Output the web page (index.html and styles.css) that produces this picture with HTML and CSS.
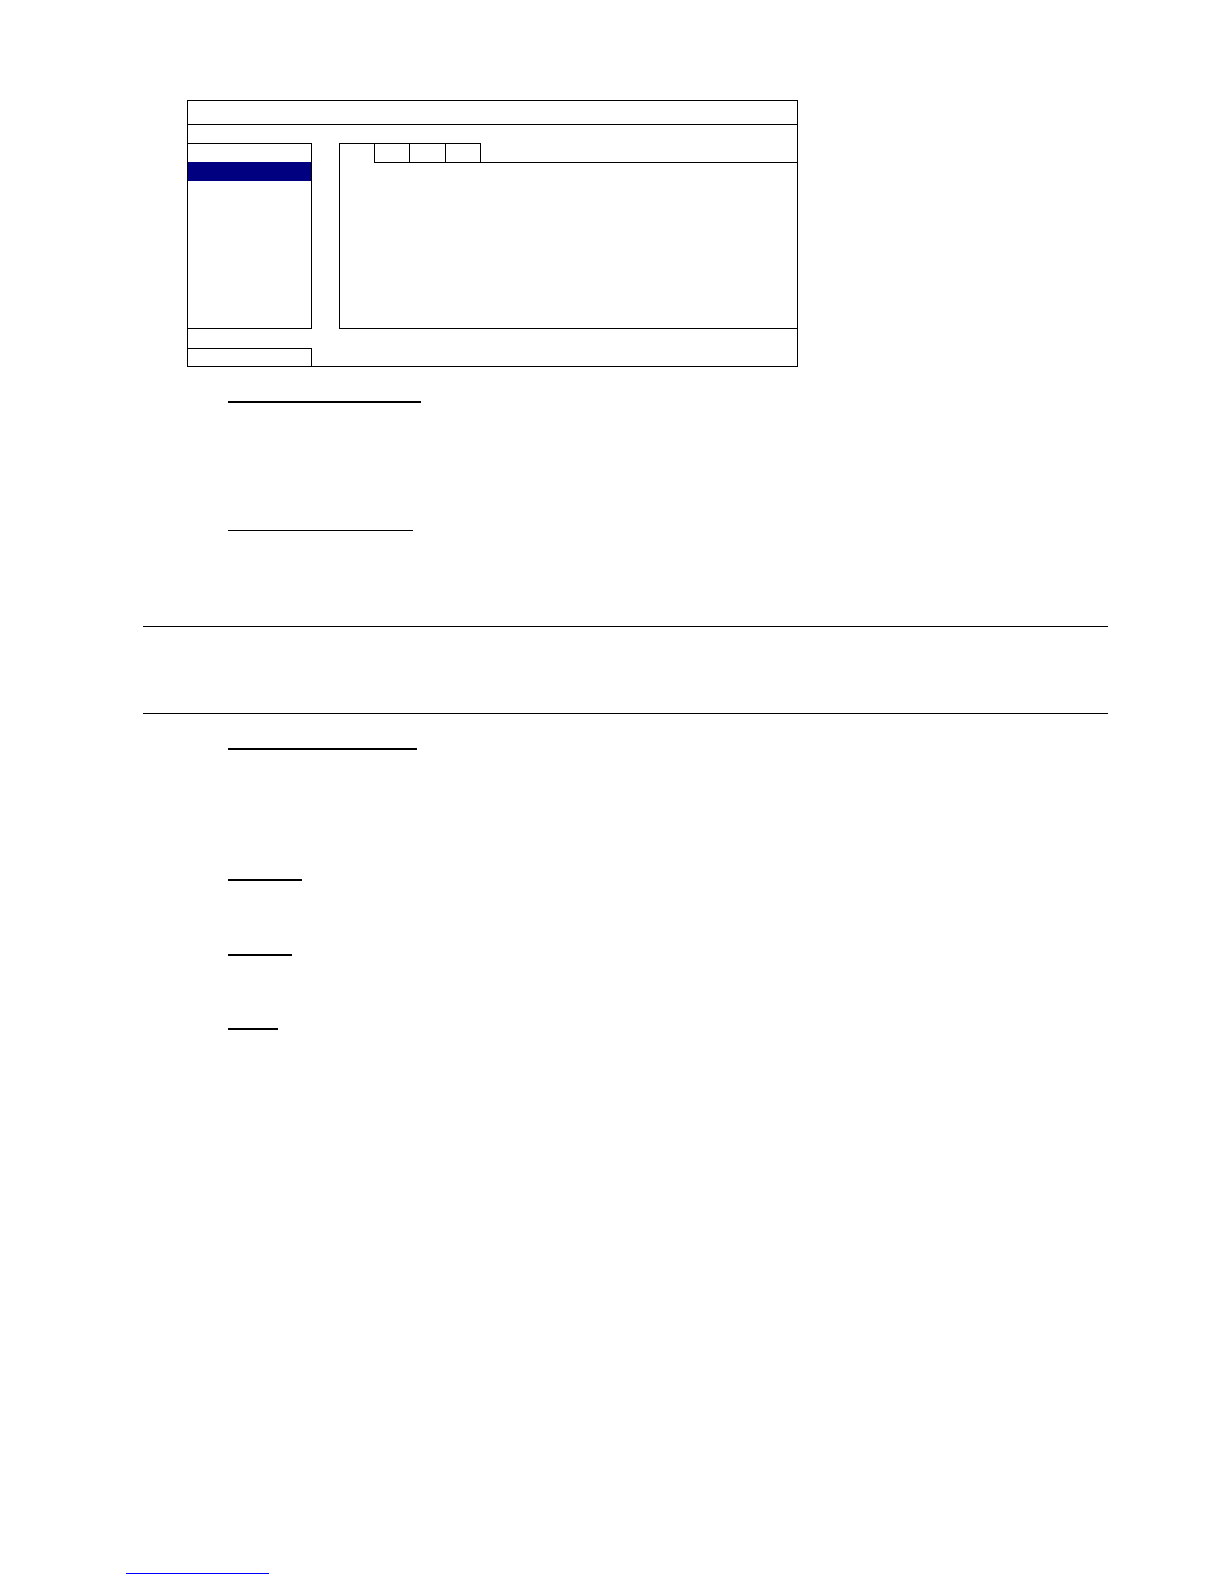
FILE: index.html
```html
<!DOCTYPE html>
<html lang="en">
<head>
<meta charset="utf-8">
<title>Manual page</title>
<link rel="stylesheet" href="styles.css">
</head>
<body>
<div class="page">
  <div class="screen">
    <div class="screen-header"></div>
    <div class="screen-body">
      <div class="sidebar">
        <div class="side-item"></div>
        <div class="side-item selected"></div>
      </div>
      <div class="panel">
        <div class="tabs">
          <div class="tab-spacer"></div>
          <div class="tab tab-1"></div>
          <div class="tab tab-2"></div>
          <div class="tab tab-3"></div>
          <div class="tab-rest"></div>
        </div>
        <div class="panel-content"></div>
      </div>
    </div>
    <div class="screen-footer">
      <div class="footer-box"></div>
    </div>
  </div>

  <div class="heading h1"></div>
  <div class="heading h2"></div>
  <div class="rule r1"></div>
  <div class="rule r2"></div>
  <div class="heading h3"></div>
  <div class="heading h4"></div>
  <div class="heading h5"></div>
  <div class="heading h6"></div>
  <div class="footer-link"></div>
</div>
</body>
</html>
```

FILE: styles.css
```css
* { box-sizing: border-box; }
html, body { margin: 0; padding: 0; background: #fff; }
body { font-family: "Liberation Serif", "Times New Roman", serif; }

.page {
  width: 1224px;
  min-height: 1584px;
  padding-top: 100px;
  display: flex;
  flex-direction: column;
  align-items: flex-start;
}

/* DVR-style menu screen */
.screen {
  margin-left: 187px;
  width: 611px;
  height: 267px;
  border: 1px solid #000;
  display: flex;
  flex-direction: column;
}
.screen-header {
  height: 24px;
  border-bottom: 1px solid #000;
}
.screen-body {
  margin-top: 18px;
  height: 186px;
  display: flex;
}
.sidebar {
  width: 124px;
  border-top: 1px solid #000;
  border-right: 1px solid #000;
  border-bottom: 1px solid #000;
}
.side-item { height: 18px; }
.side-item.selected { height: 19px; background: #000080; }

.panel {
  margin-left: 27px;
  flex: 1;
  border-left: 1px solid #000;
  border-bottom: 1px solid #000;
  display: flex;
  flex-direction: column;
}
.tabs {
  height: 20px;
  display: flex;
}
.tab-spacer {
  width: 34px;
  border-top: 1px solid #000;
}
.tab {
  border-top: 1px solid #000;
  border-left: 1px solid #000;
  border-bottom: 1px solid #000;
}
.tab-1 { width: 35px; }
.tab-2 { width: 36px; }
.tab-3 { width: 36px; border-right: 1px solid #000; }
.tab-rest {
  flex: 1;
  border-bottom: 1px solid #000;
}
.panel-content { flex: 1; }

.screen-footer {
  margin-top: 19px;
  height: 18px;
}
.footer-box {
  width: 124px;
  height: 18px;
  border-top: 1px solid #000;
  border-right: 1px solid #000;
}

/* underlined headings (text not rendered) */
.heading {
  margin-left: 228px;
  height: 2px;
  border-bottom: 2px solid #000;
}
.h1 { width: 193px; margin-top: 34px; }
.h2 { width: 185px; margin-top: 127px; height: 1px; border-bottom-width: 1px; }
.h3 { width: 189px; margin-top: 34px; }
.h4 { width: 74px; margin-top: 129px; }
.h5 { width: 64px; margin-top: 73px; }
.h6 { width: 50px; margin-top: 72px; }

.rule {
  margin-left: 143px;
  width: 965px;
  height: 1px;
  border-bottom: 1px solid #000;
}
.r1 { margin-top: 95px; }
.r2 { margin-top: 86px; }

.footer-link {
  margin-left: 126px;
  margin-top: 543px;
  width: 143px;
  height: 1px;
  border-bottom: 1px solid #0000ff;
}
```
